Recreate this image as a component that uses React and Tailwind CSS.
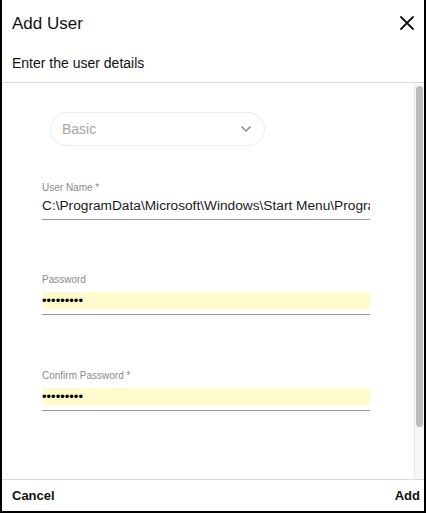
import React from "react";

function Field({ label, value, password }) {
  return (
    <div className="flex flex-col w-[328px]">
      <div className="text-[10px] leading-[12px] text-[#8a8a8a]">{label}</div>
      {password ? (
        <div className="mt-[6px] h-[17px] bg-[#fefbcc] flex items-center text-[13px] text-black leading-none">
          {value}
        </div>
      ) : (
        <div className="mt-[3px] h-[17px] text-[13.7px] leading-[17px] text-[#1a1a1a] whitespace-nowrap overflow-hidden">
          {value}
        </div>
      )}
      <div className="h-px bg-[#9a9a9a] mt-[5px]" />
    </div>
  );
}

export default function App() {
  return (
    <div
      className="w-[426px] h-[513px] bg-white border-l-2 border-r-2 border-b-2 border-black flex flex-col overflow-hidden"
      style={{ fontFamily: '"Liberation Sans", Arial, sans-serif' }}
    >
      <div className="h-[46px] flex items-center justify-between pl-[10px] pr-[10px] pt-[2px]">
        <div className="text-[17px] text-[#111]">Add User</div>
        <svg width="14" height="14" viewBox="0 0 14 14" className="mb-[2px]">
          <path d="M1 1 L13 13 M13 1 L1 13" stroke="#111" strokeWidth="1.8" strokeLinecap="round" />
        </svg>
      </div>
      <div className="h-[36px] flex items-center pl-[10px] text-[14px] text-[#111] pb-[2px]">
        Enter the user details
      </div>
      <div className="h-px bg-[#d9d9d9]" />
      <div className="flex-1 flex min-h-0">
        <div className="flex-1 min-w-0 pl-[40px]">
          <div className="mt-[29px] ml-[8px] w-[215px] h-[34px] rounded-full border border-[#ececec] flex items-center justify-between pl-[11px] pr-[12px]">
            <span className="text-[14px] text-[#a6a6a6]">Basic</span>
            <svg width="12" height="8" viewBox="0 0 12 8">
              <path d="M1.5 1.5 L6 6 L10.5 1.5" stroke="#8a8a8a" strokeWidth="1.5" fill="none" />
            </svg>
          </div>
          <div className="mt-[36px]">
            <Field label="User Name *" value={"C:\\ProgramData\\Microsoft\\Windows\\Start Menu\\Progra"} />
          </div>
          <div className="mt-[54px]">
            <Field label="Password" value="•••••••••" password />
          </div>
          <div className="mt-[55px]">
            <Field label="Confirm Password *" value="•••••••••" password />
          </div>
        </div>
        <div className="w-[10px] shrink-0 bg-[#f7f7f7] border-l border-[#e6e6e6] pt-[3px] pb-[52px] flex">
          <div className="w-[7px] ml-[1px] rounded-full bg-[#bdbdbd]" />
        </div>
      </div>
      <div className="h-px bg-[#d9d9d9]" />
      <div className="h-[31px] flex items-center justify-between pl-[10px] pr-[4px] text-[13px] font-bold text-[#111]">
        <span>Cancel</span>
        <span>Add</span>
      </div>
    </div>
  );
}
